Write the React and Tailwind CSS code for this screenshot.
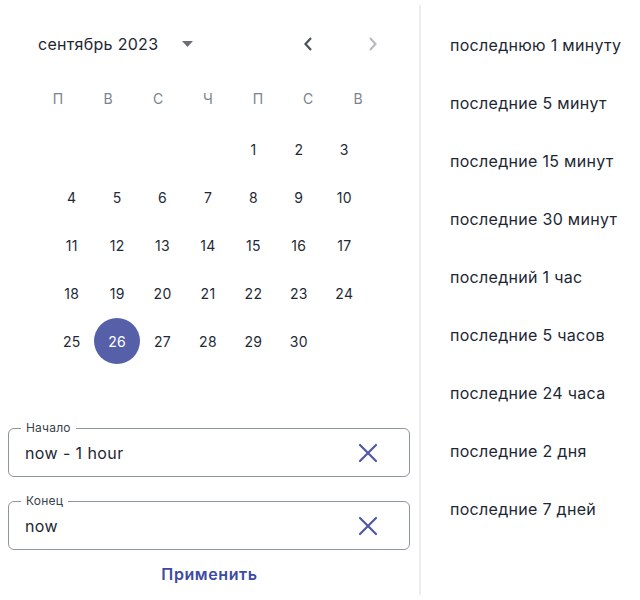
import React, { useState } from 'react';

const FONT = { fontFamily: 'Inter, "Noto Sans", sans-serif' };

const weekDays = ['П', 'В', 'С', 'Ч', 'П', 'С', 'В'];

const presets = [
  'последнюю 1 минуту',
  'последние 5 минут',
  'последние 15 минут',
  'последние 30 минут',
  'последний 1 час',
  'последние 5 часов',
  'последние 24 часа',
  'последние 2 дня',
  'последние 7 дней',
];

// September 2023 starts on Friday (index 4 when week starts Monday)
const buildWeeks = () => {
  const cells = [];
  for (let i = 0; i < 4; i++) cells.push(null);
  for (let d = 1; d <= 30; d++) cells.push(d);
  const weeks = [];
  for (let i = 0; i < cells.length; i += 7) weeks.push(cells.slice(i, i + 7));
  return weeks;
};

const ClearIcon = () => (
  <svg width="20" height="20" viewBox="0 0 20 20" fill="none">
    <path d="M2 2 L18 18 M18 2 L2 18" stroke="#4f58a6" strokeWidth="2.2" strokeLinecap="round" />
  </svg>
);

const Field = ({ label, value, onClear }) => (
  <div className="relative h-[49px] rounded-[6px] border border-[#8d959e] flex items-center pl-[16px] pr-[31px]">
    <span className="absolute -top-[9px] left-[12px] bg-white px-[5px] text-[12px] leading-[16px] tracking-[0.2px] text-[#38414c]">
      {label}
    </span>
    <span className="flex-1 text-[16px] tracking-[0.4px] text-[#1d2733]">{value}</span>
    <button type="button" onClick={onClear} className="flex items-center justify-center">
      <ClearIcon />
    </button>
  </div>
);

const App = () => {
  const [selected, setSelected] = useState(26);
  const [start, setStart] = useState('now - 1 hour');
  const [end, setEnd] = useState('now');
  const weeks = buildWeeks();

  return (
    <div className="w-[640px] h-[600px] bg-white flex" style={FONT}>
      <div className="w-[419px] flex flex-col">
        <div className="h-[48px] mt-[20px] flex items-center">
          <span className="ml-[38px] text-[16px] tracking-[0.3px] text-[#1d2733]">сентябрь 2023</span>
          <svg className="ml-[24px]" width="11" height="6" viewBox="0 0 11 6">
            <path d="M0 0 L11 0 L5.5 6 Z" fill="#6c6f73" />
          </svg>
          <svg className="ml-[110px]" width="10" height="16" viewBox="0 0 10 16" fill="none">
            <path d="M8 2 L2.5 8 L8 14" stroke="#4d5258" strokeWidth="2.2" />
          </svg>
          <svg className="ml-[55px]" width="10" height="16" viewBox="0 0 10 16" fill="none">
            <path d="M2 2 L7.5 8 L2 14" stroke="#b8bbbf" strokeWidth="2.2" />
          </svg>
        </div>

        <div className="ml-[33px] w-[350px] h-[40px] mt-[10px] grid grid-cols-7 items-center">
          {weekDays.map((d, i) => (
            <span key={i} className="text-center text-[14px] text-[#7b838c]">
              {d}
            </span>
          ))}
        </div>

        <div className="ml-[49px] w-[318px] mt-[7px] flex flex-col">
          {weeks.map((week, wi) => (
            <div key={wi} className="h-[48px] grid grid-cols-7 items-center">
              {Array.from({ length: 7 }).map((_, i) => {
                const day = week[i];
                if (!day) return <span key={i} />;
                const isSel = day === selected;
                return (
                  <button
                    key={i}
                    type="button"
                    onClick={() => setSelected(day)}
                    className="flex items-center justify-center"
                  >
                    <span
                      className={`w-[46px] h-[46px] rounded-full flex items-center justify-center text-[14px] tracking-[0.3px] ${
                        isSel ? 'bg-[#5560a9] text-white' : 'text-[#1f2a37]'
                      }`}
                    >
                      {day}
                    </span>
                  </button>
                );
              })}
            </div>
          ))}
        </div>

        <div className="ml-[8px] w-[402px] mt-[63px] flex flex-col gap-[24px]">
          <Field label="Начало" value={start} onClear={() => setStart('')} />
          <Field label="Конец" value={end} onClear={() => setEnd('')} />
        </div>

        <button type="button" className="mt-[12px] self-center text-[16px] font-semibold tracking-[0.6px] text-[#3d4aa3]">
          Применить
        </button>
      </div>

      <div className="w-[2px] bg-[#ececec] mt-[5px] mb-[5px]" />

      <div className="flex-1 flex flex-col pt-[16px] pl-[29px]">
        {presets.map((p) => (
          <button
            key={p}
            type="button"
            className="h-[58px] flex items-center text-left text-[16px] tracking-[0.3px] text-[#1d2733] whitespace-nowrap"
          >
            {p}
          </button>
        ))}
      </div>
    </div>
  );
};

export default App;
